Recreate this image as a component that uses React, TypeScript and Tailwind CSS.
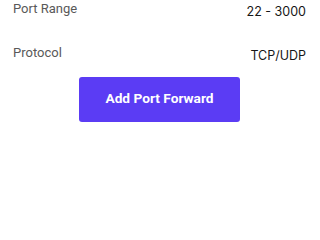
export default function App() {
  const rows = [
    { label: 'Port Range', value: '22 - 3000' },
    { label: 'Protocol', value: 'TCP/UDP' },
  ]
  return (
    <div className="h-[214px] w-[320px] bg-white font-['Roboto',sans-serif]">
      <div className="flex flex-col gap-[24px]">
        {rows.map((r) => (
          <div key={r.label} className="flex items-start justify-between pl-[13px] pr-[14px] text-[13px] leading-[17px]">
            <span className="text-[#595959]">{r.label}</span>
            <span className="mt-[3px] font-['Inter',sans-serif] text-[12.5px] text-[#161616]">{r.value}</span>
          </div>
        ))}
      </div>
      <button className="ml-[79px] mt-[13px] flex h-[45px] w-[161px] items-center justify-center rounded-[3px] bg-[#5b3cf4] pb-[3px] text-[13.7px] font-bold text-white">
        Add Port Forward
      </button>
    </div>
  )
}
